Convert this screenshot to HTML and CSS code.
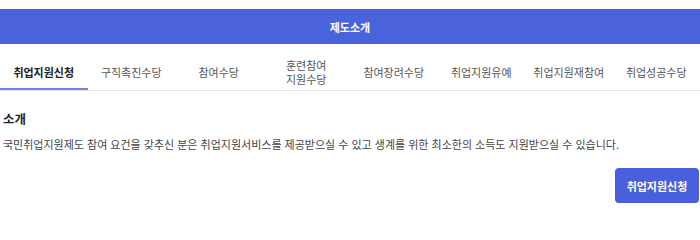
FILE: index.html
```html
<!DOCTYPE html>
<html lang="ko">
<head>
<meta charset="utf-8">
<link rel="stylesheet" href="styles.css">
</head>
<body>
<div class="page">
  <header class="topbar">제도소개</header>
  <nav class="tabs">
    <div class="tab active">취업지원신청</div>
    <div class="tab">구직촉진수당</div>
    <div class="tab">참여수당</div>
    <div class="tab">훈련참여<br>지원수당</div>
    <div class="tab">참여장려수당</div>
    <div class="tab">취업지원유예</div>
    <div class="tab">취업지원재참여</div>
    <div class="tab">취업성공수당</div>
  </nav>
  <section class="intro">
    <h2 class="intro-title">소개</h2>
    <p class="intro-text">국민취업지원제도 참여 요건을 갖추신 분은 취업지원서비스를 제공받으실 수 있고 생계를 위한 최소한의 소득도 지원받으실 수 있습니다.</p>
    <div class="actions">
      <button class="apply-btn" type="button">취업지원신청</button>
    </div>
  </section>
</div>
</body>
</html>
```
FILE: styles.css
```css
html, body {
  margin: 0;
  padding: 0;
  background: #ffffff;
}
body {
  font-family: "Noto Sans CJK KR", "Noto Sans", sans-serif;
  color: #333;
}
.page {
  padding-top: 9px;
}
.topbar {
  height: 35px;
  background: #4a62dc;
  color: #ffffff;
  font-weight: 700;
  font-size: 11px;
  display: flex;
  align-items: center;
  justify-content: center;
}
.tabs {
  margin-top: 13px;
  display: grid;
  grid-template-columns: repeat(8, 1fr);
  border-bottom: 1px solid #e4e4e4;
}
.tab {
  box-sizing: border-box;
  height: 33px;
  display: flex;
  align-items: center;
  justify-content: center;
  text-align: center;
  font-size: 11px;
  line-height: 13.5px;
  color: #555;
  border-bottom: 2px solid transparent;
}
.tab.active {
  color: #222;
  font-weight: 700;
  border-bottom-color: #7383e6;
}
.intro {
  padding: 0 1px 0 3px;
}
.intro-title {
  margin: 20px 0 0;
  font-size: 12.5px;
  line-height: 16px;
  font-weight: 700;
  color: #222;
}
.intro-text {
  margin: 10px 0 0;
  font-size: 11px;
  line-height: 14px;
  color: #444;
}
.actions {
  display: flex;
  justify-content: flex-end;
  margin-top: 17px;
}
.apply-btn {
  width: 84px;
  height: 35px;
  border: none;
  border-radius: 4px;
  background: #4a5fdc;
  color: #ffffff;
  font-family: "Noto Sans CJK KR", "Noto Sans", sans-serif;
  font-weight: 700;
  font-size: 11px;
  padding: 0;
}
```
